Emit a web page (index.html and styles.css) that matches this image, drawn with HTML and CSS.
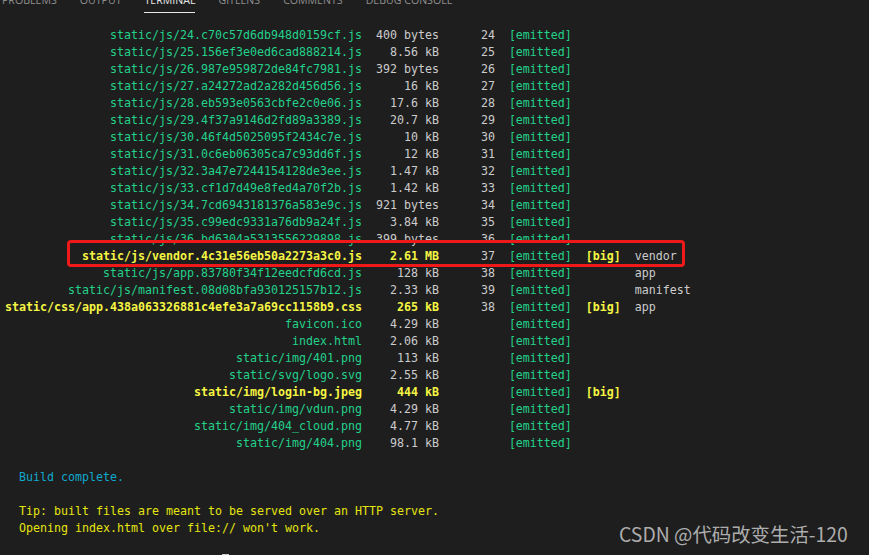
FILE: index.html
```html
<!DOCTYPE html>
<html lang="en">
<head>
<meta charset="utf-8">
<title>Terminal</title>
<link rel="stylesheet" href="styles.css">
</head>
<body>
<div class="panel">
  <div class="tabs">
    <span class="tab">Problems</span>
    <span class="tab">Output</span>
    <span class="tab active">Terminal</span>
    <span class="tab">GitLens</span>
    <span class="tab">Comments</span>
    <span class="tab">Debug Console</span>
  </div>
  <div class="term">
    <div class="row"><span class="f">static/js/24.c70c57d6db948d0159cf.js</span><span class="s">400 bytes</span><span class="c">24</span><span class="e">[emitted]</span></div>
    <div class="row"><span class="f">static/js/25.156ef3e0ed6cad888214.js</span><span class="s">8.56 kB</span><span class="c">25</span><span class="e">[emitted]</span></div>
    <div class="row"><span class="f">static/js/26.987e959872de84fc7981.js</span><span class="s">392 bytes</span><span class="c">26</span><span class="e">[emitted]</span></div>
    <div class="row"><span class="f">static/js/27.a24272ad2a282d456d56.js</span><span class="s">16 kB</span><span class="c">27</span><span class="e">[emitted]</span></div>
    <div class="row"><span class="f">static/js/28.eb593e0563cbfe2c0e06.js</span><span class="s">17.6 kB</span><span class="c">28</span><span class="e">[emitted]</span></div>
    <div class="row"><span class="f">static/js/29.4f37a9146d2fd89a3389.js</span><span class="s">20.7 kB</span><span class="c">29</span><span class="e">[emitted]</span></div>
    <div class="row"><span class="f">static/js/30.46f4d5025095f2434c7e.js</span><span class="s">10 kB</span><span class="c">30</span><span class="e">[emitted]</span></div>
    <div class="row"><span class="f">static/js/31.0c6eb06305ca7c93dd6f.js</span><span class="s">12 kB</span><span class="c">31</span><span class="e">[emitted]</span></div>
    <div class="row"><span class="f">static/js/32.3a47e7244154128de3ee.js</span><span class="s">1.47 kB</span><span class="c">32</span><span class="e">[emitted]</span></div>
    <div class="row"><span class="f">static/js/33.cf1d7d49e8fed4a70f2b.js</span><span class="s">1.42 kB</span><span class="c">33</span><span class="e">[emitted]</span></div>
    <div class="row"><span class="f">static/js/34.7cd6943181376a583e9c.js</span><span class="s">921 bytes</span><span class="c">34</span><span class="e">[emitted]</span></div>
    <div class="row"><span class="f">static/js/35.c99edc9331a76db9a24f.js</span><span class="s">3.84 kB</span><span class="c">35</span><span class="e">[emitted]</span></div>
    <div class="row"><span class="f">static/js/36.bd6304a5313556229898.js</span><span class="s">399 bytes</span><span class="c">36</span><span class="e">[emitted]</span></div>
    <div class="row"><span class="f big-t">static/js/vendor.4c31e56eb50a2273a3c0.js</span><span class="s big-t">2.61 MB</span><span class="c">37</span><span class="e">[emitted]</span><span class="b">[big]</span><span class="n">vendor</span></div>
    <div class="row"><span class="f">static/js/app.83780f34f12eedcfd6cd.js</span><span class="s">128 kB</span><span class="c">38</span><span class="e">[emitted]</span><span class="b"></span><span class="n">app</span></div>
    <div class="row"><span class="f">static/js/manifest.08d08bfa930125157b12.js</span><span class="s">2.33 kB</span><span class="c">39</span><span class="e">[emitted]</span><span class="b"></span><span class="n">manifest</span></div>
    <div class="row"><span class="f big-t">static/css/app.438a063326881c4efe3a7a69cc1158b9.css</span><span class="s big-t">265 kB</span><span class="c">38</span><span class="e">[emitted]</span><span class="b">[big]</span><span class="n">app</span></div>
    <div class="row"><span class="f">favicon.ico</span><span class="s">4.29 kB</span><span class="c"></span><span class="e">[emitted]</span></div>
    <div class="row"><span class="f">index.html</span><span class="s">2.06 kB</span><span class="c"></span><span class="e">[emitted]</span></div>
    <div class="row"><span class="f">static/img/401.png</span><span class="s">113 kB</span><span class="c"></span><span class="e">[emitted]</span></div>
    <div class="row"><span class="f">static/svg/logo.svg</span><span class="s">2.55 kB</span><span class="c"></span><span class="e">[emitted]</span></div>
    <div class="row"><span class="f big-t">static/img/login-bg.jpeg</span><span class="s big-t">444 kB</span><span class="c"></span><span class="e">[emitted]</span><span class="b">[big]</span></div>
    <div class="row"><span class="f">static/img/vdun.png</span><span class="s">4.29 kB</span><span class="c"></span><span class="e">[emitted]</span></div>
    <div class="row"><span class="f">static/img/404_cloud.png</span><span class="s">4.77 kB</span><span class="c"></span><span class="e">[emitted]</span></div>
    <div class="row"><span class="f">static/img/404.png</span><span class="s">98.1 kB</span><span class="c"></span><span class="e">[emitted]</span></div>
    <div class="row"> </div>
    <div class="row msg-blue">  Build complete.</div>
    <div class="row"> </div>
    <div class="row msg-yellow">  Tip: built files are meant to be served over an HTTP server.</div>
    <div class="row msg-yellow">  Opening index.html over file:// won't work.</div>
    <div class="row"> </div>
    <div class="row"><span class="pad">                               </span><span class="cursor"></span></div>
    <div class="highlight"></div>
  </div>
  <div class="watermark">CSDN @代码改变生活-120</div>
</div>
</body>
</html>
```
FILE: styles.css
```css
html, body {
  margin: 0;
  padding: 0;
  background: #1e1e1e;
  overflow: hidden;
}

.panel {
  position: relative;
  width: 869px;
  height: 555px;
  overflow: hidden;
  background: #1e1e1e;
}

.tabs {
  display: flex;
  gap: 23px;
  margin-top: -8px;
  padding-left: 2px;
  font-family: "Open Sans", "Noto Sans", sans-serif;
  font-size: 10.6px;
  line-height: 16px;
  text-transform: uppercase;
  color: #8f8f8f;
}

.tab {
  padding-bottom: 4px;
  border-bottom: 1px solid transparent;
}

.tab.active {
  color: #e7e7e7;
  border-bottom-color: #e7e7e7;
}

.term {
  position: relative;
  margin-top: 14px;
  padding-left: 5px;
  font-family: "DejaVu Sans Mono", "Liberation Mono", monospace;
  font-size: 11.63px;
  line-height: 17px;
  color: #cccccc;
}

.row {
  display: flex;
  height: 17px;
  white-space: pre;
}

.f {
  width: 51ch;
  text-align: right;
  color: #23d18b;
}

.s {
  margin-left: 2ch;
  width: 9ch;
  text-align: right;
}

.c {
  width: 8ch;
  text-align: right;
}

.e {
  margin-left: 2ch;
  width: 9ch;
  color: #23d18b;
}

.b {
  margin-left: 2ch;
  width: 5ch;
  color: #f5f543;
  font-weight: bold;
}

.n {
  margin-left: 2ch;
}

.big-t {
  color: #f5f543;
  font-weight: bold;
}

.msg-blue {
  color: #11a8cd;
}

.msg-yellow {
  color: #e5e510;
}

.cursor {
  display: inline-block;
  width: 7px;
  height: 15px;
  margin-top: 0;
  background: #cccccc;
}

.highlight {
  position: absolute;
  left: 67px;
  top: 213px;
  width: 618px;
  height: 27px;
  box-sizing: border-box;
  border: 3px solid #f0191a;
  border-radius: 4px;
}

.watermark {
  position: absolute;
  left: 619px;
  top: 521px;
  font-family: "Noto Sans CJK SC", "Noto Sans", sans-serif;
  font-size: 19.4px;
  line-height: 26px;
  color: #adadad;
  white-space: nowrap;
}
```
